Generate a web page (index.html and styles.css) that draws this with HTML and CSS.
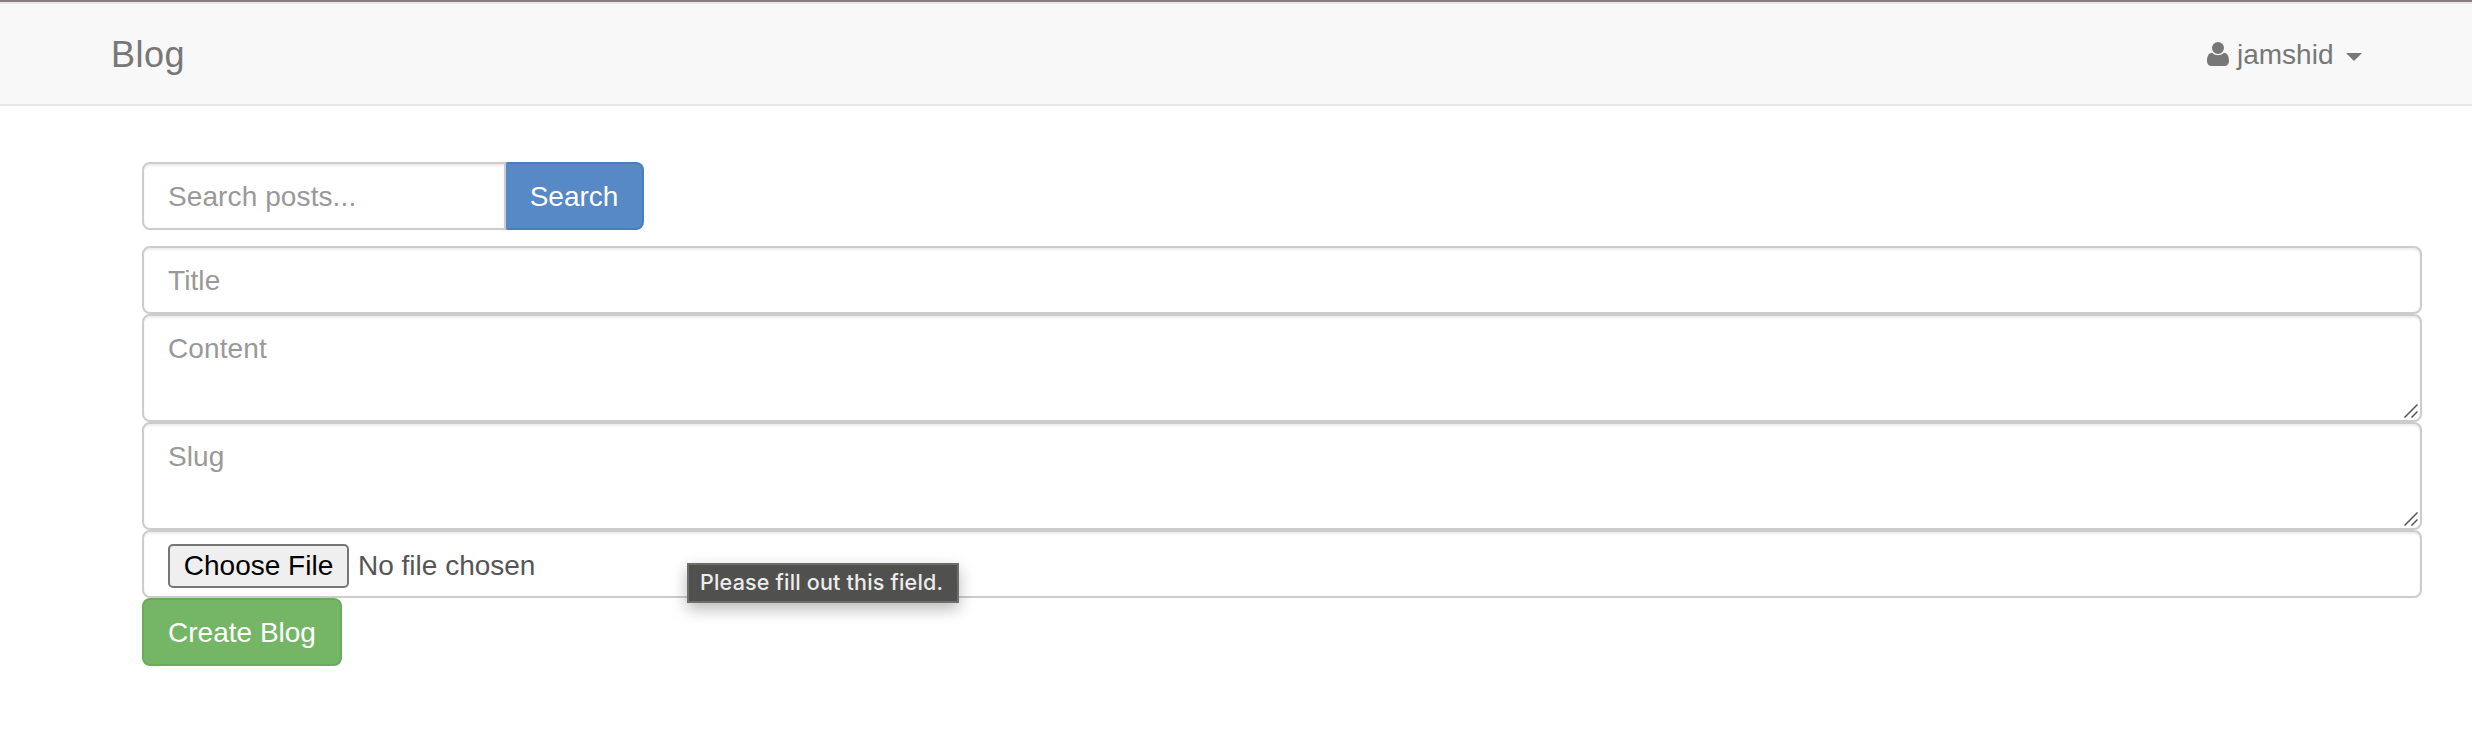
FILE: index.html
```html
<!DOCTYPE html>
<html lang="en">
<head>
<meta charset="utf-8">
<title>Blog</title>
<link rel="stylesheet" href="styles.css">
</head>
<body>
<nav class="navbar">
  <a class="brand">Blog</a>
  <a class="user">
    <svg class="user-icon" viewBox="0 0 22 24" width="22" height="24"><path fill="currentColor" d="M11 0a6 6 0 0 1 0 12A6 6 0 0 1 11 0zM5.200 10.800C7 12.600 9 13.300 11 13.300s4-.7 5.800-2.500C20.500 10.900 22 14.500 22 19c0 3-1.900 5-4.600 5H4.600C1.900 24 0 22 0 19c0-4.500 1.500-8.100 5.200-8.200z"/></svg>
    <span class="user-name">jamshid</span>
    <span class="caret"></span>
  </a>
</nav>
<main class="content">
  <form class="search">
    <input class="field search-field" type="text" placeholder="Search posts...">
    <button class="btn btn-search" type="button">Search</button>
  </form>
  <form class="post-form">
    <input class="field" type="text" placeholder="Title">
    <div class="area">
      <textarea class="field field-area" placeholder="Content"></textarea>
      <svg class="grip" viewBox="0 0 14 14" width="14" height="14"><path d="M.5 13.500 13.500.5M7.500 13.500l6-6" stroke="#555" stroke-width="1.500"/></svg>
    </div>
    <div class="area">
      <textarea class="field field-area" placeholder="Slug"></textarea>
      <svg class="grip" viewBox="0 0 14 14" width="14" height="14"><path d="M.5 13.500 13.500.5M7.500 13.500l6-6" stroke="#555" stroke-width="1.500"/></svg>
    </div>
    <div class="area">
      <input class="field field-file" type="file">
      <div class="tooltip">Please fill out this field.</div>
    </div>
    <button class="btn btn-create" type="button">Create Blog</button>
  </form>
</main>
</body>
</html>
```
FILE: styles.css
```css
* { box-sizing: border-box; }
body {
  margin: 0;
  background: #fff;
  font: 28px/40px "Liberation Sans", Arial, sans-serif;
  color: #333;
}
.navbar {
  display: flex;
  justify-content: space-between;
  align-items: center;
  height: 106px;
  padding: 0 110px 0 111px;
  border-top: 2px solid #857b84;
  border-bottom: 2px solid #e7e7e7;
  background: #f8f8f8;
  box-shadow: inset 0 2px #e7e7e7;
  color: #777;
}
.brand { padding-top: 3px; font-size: 36px; letter-spacing: .5px; }
.user { display: flex; align-items: center; padding-top: 2px; }
.user-icon { margin-right: 8px; }
.user-name { width: 96px; padding-top: 1px; white-space: nowrap; }
.caret {
  margin: 6px 0 0 13px;
  border-top: 8px solid;
  border-left: 8px solid transparent;
  border-right: 8px solid transparent;
}
.content { padding: 56px 50px 0 142px; }
.search { display: flex; margin-bottom: 16px; }
.field {
  display: block;
  width: 100%;
  height: 68px;
  margin: 0;
  padding: 13px 24px 11px;
  border: 2px solid #ccc;
  border-radius: 8px;
  background: #fff;
  box-shadow: inset 0 2px 2px rgba(0, 0, 0, .075);
  color: #555;
  font: inherit;
  letter-spacing: .1px;
  outline: none;
}
.field::placeholder { color: #999; opacity: 1; }
.search-field { width: 364px; border-radius: 8px 0 0 8px; }
.field-area { height: 108px; resize: none; overflow: hidden; }
.field-file { padding: 12px 24px; letter-spacing: 0; }
.field-file::file-selector-button {
  width: 181px;
  height: 44px;
  margin: 0 9px 0 0;
  padding: 0;
  border: 2px solid #767676;
  border-radius: 5px;
  background: #efefef;
  color: #000;
  font: inherit;
  line-height: 40px;
}
.btn {
  height: 68px;
  margin: 0;
  padding: 13px 0 11px;
  border: 2px solid;
  border-radius: 8px;
  color: #fff;
  font: inherit;
}
.btn-search {
  width: 138px;
  padding-right: 2px;
  border-color: #4a7ebb;
  border-left-color: #5689c5;
  border-radius: 0 8px 8px 0;
  background: #5689c5;
}
.btn-create {
  display: block;
  width: 200px;
  border-color: #68ae58;
  background: #75b566;
}
.area { position: relative; }
.grip { position: absolute; right: 4px; bottom: 4px; }
.tooltip {
  position: absolute;
  left: 545px;
  top: 33px;
  width: 272px;
  height: 40px;
  padding-left: 11px;
  border: 2px solid #6d6d6c;
  background: #50504e;
  box-shadow: 0 6px 16px rgba(0, 0, 0, .28);
  color: #ececec;
  font: 500 21.500px/35px Inter, sans-serif;
  letter-spacing: .2px;
  white-space: nowrap;
}
```
